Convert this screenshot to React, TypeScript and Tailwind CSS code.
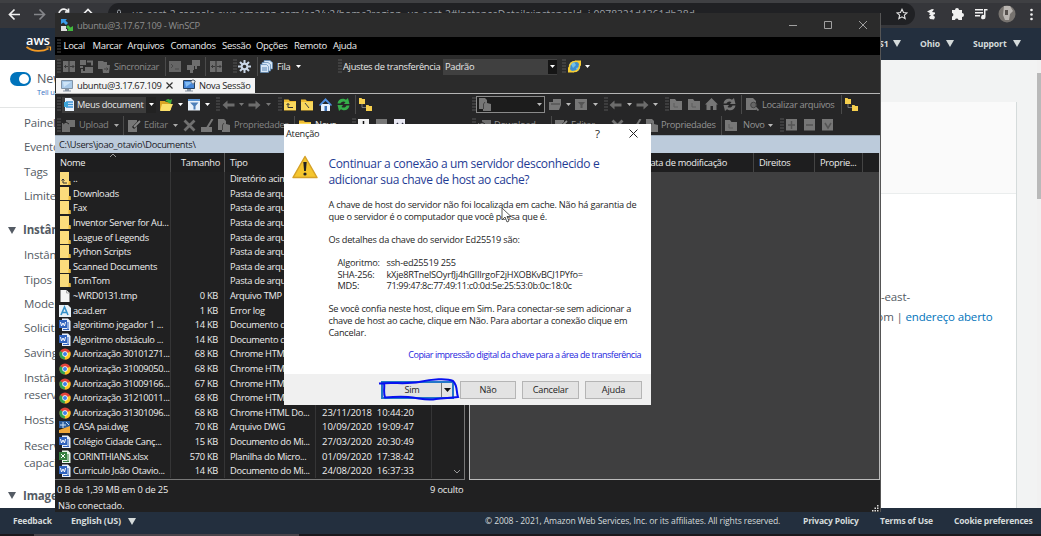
import type { ReactNode } from "react";

type IconProps = { className?: string };

const Grip = () => (
  <svg width="4" height="15" viewBox="0 0 4 15" className="shrink-0">
    <path d="M0.5 1h1M0.5 4h1M0.5 7h1M0.5 10h1M0.5 13h1M2.5 1h1M2.5 4h1M2.5 7h1M2.5 10h1M2.5 13h1" stroke="#666" strokeWidth="1.4" />
  </svg>
);
const Sep = () => <div className="h-[19px] w-px bg-[#4a4a4a]" />;
const Caret = ({ className = "text-white" }: IconProps) => (
  <svg width="5" height="3" viewBox="0 0 5 3" className={`shrink-0 ${className}`}>
    <path d="M0 0h5L2.5 3z" fill="currentColor" />
  </svg>
);
const Slot = ({ w, children }: { w: string; children?: ReactNode }) => (
  <div className={`flex h-full shrink-0 items-center whitespace-nowrap ${w}`}>{children}</div>
);
const Box = ({ children }: { children: ReactNode }) => (
  <svg width="13" height="13" viewBox="0 0 13 13" className="shrink-0">{children}</svg>
);
const GColumns = () => <Box><path d="M0 1h5.500v11H0zM6.500 1H12v11H6.500z" fill="#6e6e6e" /><path d="M1 6.500h4M7 6.500h4M3 5L1.500 6.500 3 8M9.500 5L11 6.500 9.500 8" stroke="#3a3a3a" fill="none" /></Box>;
const GSwap = () => <Box><path d="M0 0h6v5H0zM5 7h8v6H5zM0 6h3v2H0z" fill="#6e6e6e" /><path d="M7 1.500h5v4M2 9v3h3" stroke="#6e6e6e" fill="none" strokeWidth="2" /></Box>;
const GSync = () => <Box><path d="M0 1h5l1 1h3v7H0zM4 5h8l-1 8H5z" fill="#6e6e6e" /><path d="M6 9h4M8.500 7.500L10 9l-1.500 1.500" stroke="#444" fill="none" /></Box>;
const GTerm = () => <Box><path d="M0 1h12v11H0z" fill="#666" /><path d="M2 4l2 2-2 2M6 9h4" stroke="#4a4a4a" fill="none" /></Box>;
const GPcs = () => <Box><path d="M5 0h8v6H5zM0 5h7v5H0zM3 10h3v3H3zM8 6h2v3H8z" fill="#6e6e6e" /></Box>;
const GDoc = () => <Box><path d="M0 0h6l2 2v3l4 1v7H4v-2H0z" fill="#777" /><path d="M6 4l-1.500 2v5" stroke="#444" fill="none" /></Box>;
const GUp = () => <Box><path d="M4 1h9v7H4zM0 4h8v9H0z" fill="#707070" /><path d="M1 5l3-2 3 2" stroke="#2a2a2a" fill="none" /></Box>;
const GEdit = () => <Box><path d="M0 1h9v12H0z" fill="#777" /><path d="M5 9l7-7" stroke="#222" strokeWidth="3" /><path d="M6 8l6-6" stroke="#888" strokeWidth="1.800" /></Box>;
const GX = () => <Box><path d="M1.500 1.500l10 10M11.500 1.500l-10 10" stroke="#707070" strokeWidth="2.800" /></Box>;
const GBrush = () => <Box><path d="M0 8h11v5H0z" fill="#777" /><path d="M6 9l5.500-9" stroke="#777" strokeWidth="2" /></Box>;
const GFolder = () => <Box><path d="M0 1h5l1.500 2H12v9H0z" fill="#777" /><path d="M4 5v4h4" stroke="#5f5f5f" fill="none" /></Box>;
const GFolderOpen = () => <Box><path d="M0 4h4V1h8v6l-2 5H0z" fill="#777" /><path d="M2 6h9" stroke="#444" /></Box>;
const GFilter = () => <Box><path d="M0 1h12v11H0z" fill="#777" /><path d="M3 4h7L7.500 7v3h-2V7z" fill="#555" /></Box>;
const GHome = () => <Box><path d="M0 6.500L6.500 0 13 6.500h-1.500V12H8V8H5.500v4h-4V6.500z" fill="#777" /></Box>;
const Refresh = ({ className = "" }: IconProps) => (
  <svg width="13" height="13" viewBox="0 0 13 13" className={className}>
    <path d="M0.500 5.500C1 2 4 0 7.500 1L9 1.800 11 0l1.500 6H7l1.500-2C6 2.500 4 4 3.500 5.500zM12.500 7.500c-.5 3.500-3.500 5.500-7 4.500L4 11.200 2 13 .5 7H6L4.500 9c2.500 1.500 4.500 0 5-1.500z" fill="currentColor" />
  </svg>
);
const Arrow = ({ right = false }: { right?: boolean }) => (
  <svg width="13" height="10" viewBox="0 0 13 10" className={right ? "-scale-x-100" : ""}>
    <path d="M5.500 0.500v3H12.500v3H5.500v3L0.500 5z" fill="#6c6c6c" />
  </svg>
);
const GSearch = () => <Box><path d="M0 0h7l3 3v9H0z" fill="#777" /><circle cx="7.500" cy="7" r="2.800" fill="#666" stroke="#444" /><path d="M9.500 9.500l3 3" stroke="#777" strokeWidth="1.800" /></Box>;
const GSquare = ({ d, c = "#777", ink = "#555" }: { d: string; c?: string; ink?: string }) => (
  <svg width="11" height="12" viewBox="0 0 11 12"><path d="M0 0h11v11.500H0z" fill={c} /><path d={d} stroke={ink} strokeWidth="1.500" fill="none" /></svg>
);
const Tree = () => <Box><path d="M0 0h2.500l.7 1H6v5H0zM7 7h2.500l.7 1H13v5H7z" fill="#f6cf4e" /><path d="M3 6v3.500h4" stroke="#777" fill="none" /></Box>;
const YFolder = ({ up = false }: { up?: boolean }) => (
  <Box><path d="M0 1.500h4.500L6 3h6v9.500H0z" fill="#eebc32" /><path d="M0 4h12v8H0z" fill="#f9d85d" />{up ? <path d="M4 5.500v4h5M2.500 7L4 5.500 5.500 7" stroke="#333" fill="none" /> : <path d="M4 5l4 5" stroke="#444" />}</Box>
);
const Gear = () => (
  <Box><g stroke="#c9d6e6" strokeWidth="2"><path d="M6.500 0v13M0 6.500h13M2 2l9 9M11 2l-9 9" /></g><circle cx="6.500" cy="6.500" r="3.800" fill="#c9d6e6" /><circle cx="6.500" cy="6.500" r="1.800" fill="#2a2a2a" /></Box>
);
const Queue = () => <Box><g fill="#d6e6f6" stroke="#5a87b5" strokeWidth=".7"><path d="M4 .5h6l2.500 2V9H4z" /><path d="M2 2.500h6l2.500 2V11H2z" /><path d="M.5 4.500h6l2 2v6h-8z" /></g><path d="M2 8h5M2 10h5" stroke="#5a87b5" /></Box>;
const Globe = () => <Box><circle cx="6.500" cy="6.500" r="5.500" fill="#3d8ed0" /><path d="M3 4l3-2 2 3-3 3zM8 8l3-1-2 4z" fill="#71c1e8" /><path d="M0 12.500V7l2 1c0 2 1 3 3 3l1 1.500zM13 .5V6l-2-1c0-2-1-3-3-3L7 .5z" fill="#f8cf35" /><path d="M1.500 8C1 4 4 1 8 1.500M11.500 5c.5 4-2.500 7-6.500 6.500" stroke="#f8cf35" strokeWidth="1.600" fill="none" /></Box>;
const Monitor = ({ bright = false }: { bright?: boolean }) => (
  <Box><path d="M.5 1.500h11v8H.5z" fill={bright ? "#4687d8" : "#a8c9e8"} stroke={bright ? "#24405f" : "#8093a6"} /><path d="M2 3h8L3 8z" fill={bright ? "#83bdf5" : "#cde4f7"} /><path d="M4 10h4v1.500h2v1H2v-1h2z" fill="#8794a3" />{bright && <path d="M10 0l1 2 2 .5-2 1-1 2-1-2-2-1 2-.5z" fill="#e9eef4" stroke="#666" strokeWidth=".5" />}</Box>
);
const PageBlue = () => <Box><path d="M1 0h6l3 3v10H1z" fill="#eaf3fc" /><path d="M2 4h7M2 6.500h7M2 9h7" stroke="#3d93d6" strokeWidth="1.300" /><path d="M0 4h4v5H0z" fill="#3aa3d8" /></Box>;
const OpenFolder = () => <Box><path d="M0 3h5l1 1h5v8H0z" fill="#d9a423" /><path d="M2 6h11l-3 7H0z" fill="#fbe06a" /><path d="M5 4c2-4 4-3 5-2l2-1-1 5-4-2 1-1z" fill="#3fae3f" /></Box>;
const Filter = () => <Box><path d="M0 1h12v11.500H0z" fill="#e9f1fa" /><path d="M0 1h12v2H0z" fill="#5b95d4" /><path d="M2 4.500h8.500L7.500 8v3.500h-2V8z" fill="#4e7fb8" /></Box>;
const Home = () => <Box><path d="M2 6h9v7H2z" fill="#e7f0fb" /><path d="M0 7l6.500-7L13 7l-1 1-5.500-5L1 8z" fill="#4f8fe0" /><path d="M5.500 8h2.500v5H5.500z" fill="#3c70b4" /></Box>;

type Kind = "up" | "folder" | "file" | "log" | "word" | "chrome" | "dwg" | "excel";
const glyphs: Record<Kind, ReactNode> = {
  up: <><path d="M1 0h9v11l1.500.5V13H1z" fill="#fbdc7c" /><path d="M10 9h1.500v4H9z" fill="#e9b83b" /><path d="M4 7v4h4M2.500 8.500L4 7l1.500 1.500" stroke="#333" fill="none" /></>,
  folder: <><path d="M1 0h9v9l1.500.5V13H1z" fill="#fbdc7c" /><path d="M9.500 9h2v4h-2z" fill="#e9b83b" /></>,
  file: <><path d="M1.500 1h6l3 3v9h-9z" fill="#f4f4f4" /><path d="M7.500 1v3h3" stroke="#aaa" fill="none" /></>,
  log: <><path d="M0 1h9l3 3v9H0z" fill="#e9f2f8" /><path d="M2 11L5.500 3 9 11M3.500 8.500h4" stroke="#3590c8" strokeWidth="1.600" fill="none" /></>,
  word: <><path d="M3 .5h6l2.500 2.500v10H3z" fill="#e8effa" /><path d="M9 4v7M4 11.500h6" stroke="#2f62bd" /><path d="M0 2h8v8H0z" fill="#2f62bd" /><path d="M1.500 4l1 4L4 5l1.500 3 1-4" stroke="#fff" fill="none" /></>,
  excel: <><path d="M3 .5h6l2.500 2.500v10H3z" fill="#e8f5ea" /><path d="M9 4v7M4 11.500h6" stroke="#34803f" /><path d="M0 2h8v8H0z" fill="#34803f" /><path d="M2 4l4 4M6 4L2 8" stroke="#fff" fill="none" /></>,
  chrome: <><circle cx="6" cy="7" r="5.600" fill="#e2453a" /><path d="M6 7L1.200 4.100A5.600 5.600 0 0 0 5.800 12.600L8.500 8.500z" fill="#2fa24f" /><path d="M6 7l5.200-2.200A5.600 5.600 0 0 1 5.800 12.600z" fill="#fbc824" /><circle cx="6" cy="7" r="2.700" fill="#fff" /><circle cx="6" cy="7" r="2" fill="#3f7fe8" /></>,
  dwg: <><path d="M0 1h11v7H0z" fill="#2b5c9c" /><path d="M0 10l11-4v7H0z" fill="#efa73a" /><path d="M4 2v6M1 5h6M7 2l3 3" stroke="#cfe2f5" /></>,
};
const FileIcon = ({ kind }: { kind: Kind }) => (
  <svg width="12" height="14" viewBox="0 0 12 14" className="shrink-0">{glyphs[kind]}</svg>
);

const files: { kind: Kind; name: string; size?: string; type: string; date?: string }[] = [
  { kind: "up", name: "..", type: "Diretório acima" },
  { kind: "folder", name: "Downloads", type: "Pasta de arquivos" },
  { kind: "folder", name: "Fax", type: "Pasta de arquivos" },
  { kind: "folder", name: "Inventor Server for Au...", type: "Pasta de arquivos" },
  { kind: "folder", name: "League of Legends", type: "Pasta de arquivos" },
  { kind: "folder", name: "Python Scripts", type: "Pasta de arquivos" },
  { kind: "folder", name: "Scanned Documents", type: "Pasta de arquivos" },
  { kind: "folder", name: "TomTom", type: "Pasta de arquivos" },
  { kind: "file", name: "~WRD0131.tmp", size: "0 KB", type: "Arquivo TMP" },
  { kind: "log", name: "acad.err", size: "1 KB", type: "Error log" },
  { kind: "word", name: "algoritimo jogador 1 ...", size: "14 KB", type: "Documento do Mi..." },
  { kind: "word", name: "Algoritmo obstáculo ...", size: "14 KB", type: "Documento do Mi..." },
  { kind: "chrome", name: "Autorização 30101271...", size: "68 KB", type: "Chrome HTML Do..." },
  { kind: "chrome", name: "Autorização 31009050...", size: "68 KB", type: "Chrome HTML Do..." },
  { kind: "chrome", name: "Autorização 31009166...", size: "67 KB", type: "Chrome HTML Do..." },
  { kind: "chrome", name: "Autorização 31210011...", size: "68 KB", type: "Chrome HTML Do..." },
  { kind: "chrome", name: "Autorização 31301096...", size: "68 KB", type: "Chrome HTML Do...", date: "23/11/2018  10:44:20" },
  { kind: "dwg", name: "CASA pai.dwg", size: "70 KB", type: "Arquivo DWG", date: "10/09/2020  19:09:47" },
  { kind: "word", name: "Colégio Cidade Canç...", size: "15 KB", type: "Documento do Mi...", date: "27/03/2020  20:30:49" },
  { kind: "excel", name: "CORINTHIANS.xlsx", size: "570 KB", type: "Planilha do Micro...", date: "01/09/2020  17:38:42" },
  { kind: "word", name: "Curriculo João Otavio...", size: "14 KB", type: "Documento do Mi...", date: "24/08/2020  16:37:33" },
];

const Tri = ({ dark = false }: { dark?: boolean }) => (
  <svg width="8" height="7" viewBox="0 0 8 7" className="shrink-0"><path d="M0 0h8L4 7z" fill={dark ? "#545b64" : "#d5dbdb"} /></svg>
);

function Browser() {
  const side = "h-[24.4px] pl-6";
  return (
    <div className="flex h-[536px] w-[1041px] flex-col bg-white">
      <div className="flex h-7 flex-col bg-[#35363a]">
        <div className="h-[3px] bg-[#3f4043]" />
        <div className="flex h-[22px] items-center text-[#f1f1f1]">
          <svg width="108" height="22" viewBox="0 0 108 22" fill="none" stroke="currentColor" strokeWidth="1.700" className="shrink-0">
            <path d="M20 11.500H10M14.500 6.500l-5 5 5 5" />
            <path d="M34 11.500h10M39.500 6.500l5 5-5 5" stroke="#85868a" />
            <path d="M67 14.500a4.800 4.800 0 1 1 .5-6.500M68.500 5.500v3.500H65" />
            <path d="M83 11.500l5-5 5 5" />
          </svg>
          <div className="flex h-[22px] w-[807px] items-center rounded-full bg-[#202124] pl-[7px]">
            <svg width="8" height="11" viewBox="0 0 8 11" fill="none" stroke="#9aa0a6"><path d="M1 5h6v5H1zM2.500 5V2.500a1.500 1.500 0 0 1 3 0V5" /></svg>
            <span className="mt-px ml-[9px] text-[10.4px] tracking-[-0.08px] text-[#9da0a4]">us-east-2.console.aws.amazon.com/ec2/v2/home?region=us-east-2#InstanceDetails:instanceId=i-0978321d4361db38d</span>
            <svg width="12" height="12" viewBox="0 0 24 24" className="mr-[7px] ml-auto" fill="none" stroke="#e4e4e4" strokeWidth="2.200"><path d="M12 2.500l3 6.500 7 .7-5.300 4.700 1.600 7L12 17.700l-6.300 3.700 1.600-7L2 9.700 9 9z" /></svg>
          </div>
          <svg width="118" height="22" viewBox="0 0 118 22" fill="currentColor">
            <path d="M12 8.500l5-2.500 2 .5-2 2.500 3 .5v1.500l-2 1 2 2-1 2.500-4-.5-1-2 2-1.500-2-1 1-1.500z" />
            <path d="M37 8h3a2 2 0 0 1 4 0h3v3a2 2 0 0 1 0 4v3h-3.500a1.800 1.800 0 0 0-3.500 0h-3v-3.500a1.800 1.800 0 0 0 0-3.500z" transform="translate(0 -1)" />
            <path d="M60 6h8v1.500h-8zM60 9h8v1.500h-8zM60 12h5v1.500h-5zM69 6h3.500v1.500h-2V14a2.200 2.200 0 1 1-1.500-2z" />
            <circle cx="92" cy="11" r="8.500" fill="#77736f" />
            <path d="M89 3h6l3 5-3 3-1 6h-4l-2-5z" fill="#b9b5b1" /><path d="M90 7h3v5h-3z" fill="#55504d" />
            <circle cx="116.500" cy="7" r="1.300" /><circle cx="116.500" cy="11.500" r="1.300" /><circle cx="116.500" cy="16" r="1.300" />
          </svg>
        </div>
      </div>
      <div className="flex h-8 items-center bg-[#232f3e] pl-[26px] font-bold text-[#d5dbdb]">
        <svg width="26" height="20" viewBox="0 0 26 20" className="shrink-0">
          <text x="0" y="11" fontFamily="Open Sans, sans-serif" fontWeight="600" fontSize="12" textLength="24" lengthAdjust="spacingAndGlyphs" fill="#fff">aws</text>
          <path d="M0.500 13c7 5 16 5 22 1.500" stroke="#f39a23" strokeWidth="1.700" fill="none" /><path d="M20.500 13h4v3.500" stroke="#f39a23" strokeWidth="1.200" fill="none" />
        </svg>
        <div className="ml-auto flex w-[162px] shrink-0 items-center text-[8.6px] tracking-[-0.1px]">
          <span className="w-[14px]">S1</span><Tri /><span className="ml-[19px] w-[26px]">Ohio</span><Tri /><span className="ml-[19px] w-[40px]">Support</span><Tri />
        </div>
      </div>
      <div className="flex h-[448px] text-[11.5px] tracking-[-0.15px] text-[#545b64]">
        <div className="flex w-[160px] shrink-0 flex-col overflow-hidden whitespace-nowrap">
          <div className="flex h-[48px] border-b border-[#e3e5e5] pt-[12px] pl-[10px]">
            <div className="flex h-[14px] w-[21px] justify-end rounded-full bg-[#0073bb] p-[2px]"><div className="size-[10px] rounded-full bg-white" /></div>
            <div className="pl-[6px]"><div className="text-[12.5px] leading-[14px]">New EC2</div><div className="text-[7.5px] leading-[13px] text-[#3b73c4]">Tell us</div></div>
          </div>
          <div className="flex flex-col pt-[3px] leading-[24.4px]">
            <div className={side}>Painel</div><div className={side}>Eventos</div><div className={side}>Tags</div><div className={side}>Limites</div>
            <div className="mt-[9.5px] mb-[1px] flex items-center pl-[8px] font-bold"><Tri dark /><span className="ml-[7px]">Instâncias</span></div>
            <div className={side}>Instâncias</div><div className={side}>Tipos</div><div className={side}>Modelos</div><div className={side}>Solicitações</div><div className={side}>Savings</div>
            <div className="pt-[4px] pb-[5px] pl-6 leading-[17px]">Instâncias<br />reservadas</div>
            <div className={side}>Hosts</div>
            <div className="pt-[4px] pl-6 leading-[17px]">Reservas de<br />capacidade</div>
            <div className="mt-[13px] flex items-center pl-[8px] font-bold"><Tri dark /><span className="ml-[7px]">Imagens</span></div>
          </div>
        </div>
        <div className="flex grow bg-[#f2f3f3] pt-[42px]">
          <div className="flex w-[857px] flex-col border-r border-[#d5dbdb] bg-white leading-[20px] whitespace-nowrap">
            <div className="h-[92px] border-b border-[#eaeded] bg-[#fafafa]" />
            <div className="flex flex-col pt-[93px] pl-[720px]">
              <span className="pl-[1px]">-east-</span>
              <span className="-ml-[9px]">com | <span className="text-[#0073bb]">endereço aberto</span></span>
            </div>
          </div>
        </div>
        <div className="w-[4px] bg-[#f1f1f1] pt-[13px]"><div className="h-[126px] bg-[#b9b9b9]" /></div>
      </div>
      <div className="flex h-[26px] items-center bg-[#232f3e] text-[8.5px] font-bold tracking-[-0.18px] whitespace-nowrap text-[#d5dbdb]">
        <span className="w-[59px] pl-[13px]">Feedback</span><span className="ml-[12px] w-[57px] text-[9px]">English (US)</span><Tri />
        <span className="ml-[349px] w-[318px] text-[8.6px] font-normal tracking-[-0.11px]">© 2008 - 2021, Amazon Web Services, Inc. or its affiliates. All rights reserved.</span>
        <span className="w-[77px]">Privacy Policy</span><span className="w-[74px]">Terms of Use</span><span>Cookie preferences</span>
      </div>
      <div className="flex h-[2px] bg-[#1b181c]"><div className="ml-[34px] h-[2px] w-[265px] bg-[#49444a]" /></div>
    </div>
  );
}

function MainToolbar() {
  return (
    <div className="flex h-[23px] shrink-0 items-center bg-[#2b2b2b] pl-[2px] text-[#e8e8e8]">
      <Slot w="w-[6px]"><Grip /></Slot><Slot w="w-[17px]"><GColumns /></Slot><Slot w="w-[18px]"><GSwap /></Slot><Slot w="w-[16px]"><GSync /></Slot>
      <Slot w="w-[51px] text-[#8c8c8c]">Sincronizar</Slot><Slot w="w-[4px]"><Sep /></Slot><Slot w="w-[18px]"><GTerm /></Slot><Slot w="w-[18px]"><GPcs /></Slot><Slot w="w-[5px]"><Sep /></Slot>
      <Slot w="w-[23px]"><GColumns /></Slot><Slot w="w-[5px]"><Grip /></Slot><Slot w="w-[19px]"><Gear /></Slot><Slot w="w-[3px]"><Sep /></Slot><Slot w="w-[17px]"><Queue /></Slot>
      <Slot w="w-[19px]">Fila</Slot><Slot w="w-[42px]"><Caret /></Slot><Slot w="w-[5px]"><Grip /></Slot><Slot w="w-[100px]">Ajustes de transferência</Slot>
      <Slot w="w-[119px]"><div className="flex h-[16px] w-[114px] items-center justify-between bg-[#404040] pl-[2px]">Padrão<div className="flex h-[14px] w-[9px] items-center justify-center bg-[#151515]"><Caret /></div></div></Slot>
      <Slot w="w-[6px]"><Grip /></Slot><Slot w="w-[17px]"><Globe /></Slot><Slot w="w-[6px]"><Caret /></Slot>
    </div>
  );
}

function LeftTools() {
  return (
    <div className="w-[415px] shrink-0 pl-[2px] text-[#e8e8e8]">
      <div className="flex h-[21px]">
        <Slot w="w-[5px]"><Grip /></Slot>
        <Slot w="w-[98px]"><div className="flex h-[16px] w-[94px] items-center bg-[#3c3c3c] pl-[2px]"><PageBlue /><span className="w-[69px]">Meus document</span><div className="flex h-full w-[10px] items-center justify-center bg-[#222]"><Caret /></div></div></Slot>
        <Slot w="w-[18px]"><OpenFolder /></Slot><Slot w="w-[10px]"><Caret /></Slot><Slot w="w-[17px]"><Filter /></Slot><Slot w="w-[11px]"><Caret /></Slot>
        <Slot w="w-[6px]"><Grip /></Slot><Slot w="w-[17px]"><Arrow /></Slot><Slot w="w-[9px]"><Caret className="text-[#777]" /></Slot><Slot w="w-[18px]"><Arrow right /></Slot><Slot w="w-[12px]"><Caret className="text-[#777]" /></Slot>
        <Slot w="w-[6px]"><Grip /></Slot><Slot w="w-[17px]"><YFolder up /></Slot><Slot w="w-[18px]"><YFolder /></Slot><Slot w="w-[18px]"><Home /></Slot><Slot w="w-[18px]"><Refresh className="text-[#35ad49]" /></Slot><Slot w="w-[4px]"><Sep /></Slot><Slot w="w-[14px]"><Tree /></Slot>
      </div>
      <div className="flex h-[20px] text-[#858585]">
        <Slot w="w-[5px]"><Grip /></Slot><Slot w="w-[17px]"><GUp /></Slot><Slot w="w-[35px]">Upload</Slot><Slot w="w-[9px]"><Caret className="text-[#aaa]" /></Slot><Slot w="w-[5px]"><Sep /></Slot>
        <Slot w="w-[16px]"><GEdit /></Slot><Slot w="w-[29px]">Editar</Slot><Slot w="w-[10px]"><Caret className="text-[#aaa]" /></Slot><Slot w="w-[18px]"><GX /></Slot><Slot w="w-[17px]"><GBrush /></Slot><Slot w="w-[16px]"><GDoc /></Slot>
        <Slot w="w-[60px]">Propriedades</Slot><Slot w="w-[5px]"><Sep /></Slot><Slot w="w-[16px]"><YFolder /></Slot><Slot w="w-[37px] text-[#e8e8e8]">Novo</Slot>
        <Slot w="w-[6px]"><Grip /></Slot><Slot w="w-[18px]"><GSquare d="M2 6h7M5.500 2v8" c="#f2f2f2" ink="#111" /></Slot><Slot w="w-[18px]"><GSquare d="M2 6h7" /></Slot><Slot w="w-[18px]"><GSquare d="M3 4l3 5 3-5" c="#e8e8f2" ink="#334" /></Slot>
      </div>
    </div>
  );
}

function RightTools() {
  const gray = "text-[#777]";
  const light = "text-[#bbb]";
  return (
    <div className="pl-[2px] text-[#949494]">
      <div className="flex h-[21px]">
        <Slot w="w-[4px]"><Grip /></Slot>
        <Slot w="w-[73px]"><div className="flex h-[17px] w-[69px] items-center justify-between border border-[#8a8a8a] bg-[#1c1c1c] pr-[2px] pl-[2px]"><GDoc /><Caret className={light} /></div></Slot>
        <Slot w="w-[17px]"><GFolderOpen /></Slot><Slot w="w-[9px]"><Caret className={light} /></Slot><Slot w="w-[18px]"><GFilter /></Slot><Slot w="w-[11px]"><Caret className={light} /></Slot>
        <Slot w="w-[5px]"><Grip /></Slot><Slot w="w-[18px]"><Arrow /></Slot><Slot w="w-[9px]"><Caret className={light} /></Slot><Slot w="w-[17px]"><Arrow right /></Slot><Slot w="w-[12px]"><Caret className={light} /></Slot>
        <Slot w="w-[5px]"><Grip /></Slot><Slot w="w-[18px]"><GFolder /></Slot><Slot w="w-[17px]"><GFolder /></Slot><Slot w="w-[18px]"><GHome /></Slot><Slot w="w-[18px]"><Refresh className={gray} /></Slot><Slot w="w-[5px]"><Sep /></Slot>
        <Slot w="w-[16px]"><GSearch /></Slot><Slot w="w-[79px]">Localizar arquivos</Slot><Slot w="w-[4px]"><Sep /></Slot><Slot w="w-[14px]"><Tree /></Slot>
      </div>
      <div className="flex h-[20px]">
        <Slot w="w-[6px]"><Grip /></Slot><Slot w="w-[16px]"><GUp /></Slot><Slot w="w-[52px]">Download</Slot><Slot w="w-[5px]"><Caret className={gray} /></Slot><Slot w="w-[4px]"><Sep /></Slot>
        <Slot w="w-[16px]"><GEdit /></Slot><Slot w="w-[40px]">Editar</Slot><Slot w="w-[18px]"><GX /></Slot><Slot w="w-[17px]"><GBrush /></Slot><Slot w="w-[15px]"><GDoc /></Slot>
        <Slot w="w-[60px]">Propriedades</Slot><Slot w="w-[4px]"><Sep /></Slot><Slot w="w-[18px]"><GFolder /></Slot><Slot w="w-[25px]">Novo</Slot><Slot w="w-[12px]"><Caret className={light} /></Slot>
        <Slot w="w-[6px]"><Grip /></Slot><Slot w="w-[18px]"><GSquare d="M2 6h7M5.500 2v8" /></Slot><Slot w="w-[18px]"><GSquare d="M2 6h7" /></Slot><Slot w="w-[18px]"><GSquare d="M3 4l3 5 3-5" /></Slot>
      </div>
    </div>
  );
}

function WinScp() {
  return (
    <div className="absolute top-[13px] left-[55px] flex h-[499px] w-[826px] flex-col overflow-hidden border-r border-[#555] bg-[#202021] text-[9.3px] tracking-[-0.3px] text-[#eee]">
      <div className="flex h-6 shrink-0 items-center bg-[#2b2b2b] pl-[6px] text-[#8f8f8f]">
        <svg width="12" height="13" viewBox="0 0 12 13"><path d="M0 0h6L4.500 1.500 7 4 5 6 2.500 3.500 0 5z" fill="#3b9be8" /><path d="M12 12H6l1.500-1.500L5 8l2-2 2.500 2.500L12 7z" fill="#42b83e" /><path d="M0 7h5v3h1v2H0z" fill="#ddd" /></svg>
        <span className="mt-px ml-[4px]">ubuntu@3.17.67.109 - WinSCP</span>
        <svg width="80" height="10" viewBox="0 0 80 10" className="mr-[12px] ml-auto" fill="none" stroke="#a0a0a0"><path d="M1 5.500h8M36.500 1.500h7v7h-7zM71 1l8 8M79 1l-8 8" /></svg>
      </div>
      <div className="flex h-[18px] shrink-0 items-center bg-black pt-px pl-[2px] text-[9.5px]">
        <Slot w="w-[6.5px]"><Grip /></Slot><Slot w="w-[29px]">Local</Slot><Slot w="w-[35px]">Marcar</Slot><Slot w="w-[43px]">Arquivos</Slot><Slot w="w-[51.5px]">Comandos</Slot><Slot w="w-[34px]">Sessão</Slot><Slot w="w-[38px]">Opções</Slot><Slot w="w-[39px]">Remoto</Slot><Slot w="w-[30px]">Ajuda</Slot>
      </div>
      <MainToolbar />
      <div className="flex h-[16px] shrink-0 items-end border-b border-[#b5b5b5] bg-[#2b2b2b] pl-px text-[#222]">
        <div className="flex h-[15px] w-[199px] items-center bg-[#f4f4f4] pl-[5px] whitespace-nowrap">
          <Slot w="w-[16px]"><Monitor /></Slot><Slot w="w-[89px] pt-px">ubuntu@3.17.67.109</Slot>
          <Slot w="w-[17px]"><svg width="7" height="7" viewBox="0 0 7 7" stroke="#333" strokeWidth="1.200"><path d="M.5.5l6 6M6.500.5l-6 6" /></svg></Slot>
          <Slot w="w-[16px]"><Monitor bright /></Slot><Slot w="w-[55px] pt-px">Nova Sessão</Slot>
        </div>
      </div>
      <div className="flex h-[41px] shrink-0 bg-[#262627]"><LeftTools /><RightTools /></div>
      <div className="flex h-[18px] shrink-0 items-center border-t border-[#9ba9b6] bg-[#bccbdb] pl-[4px] text-[#1b2026]">C:\Users\joao_otavio\Documents\</div>
      <div className="flex h-[327px] shrink-0 bg-[#202021]">
        <div className="flex w-[410px] shrink-0 flex-col border-r border-b border-[#777]">
          <div className="flex h-[19px] shrink-0 items-center bg-[#1e1e1f]">
            <div className="flex h-full w-[116px] items-center border-r border-[#444] pl-[5px]"><span className="w-[49px]">Nome</span><svg width="8" height="5" viewBox="0 0 8 5" className="mb-[14px]" fill="none" stroke="#999"><path d="M1 4l3-3 3 3" /></svg></div>
            <div className="flex h-full w-[54px] items-center justify-end border-r border-[#555] pr-[4px]">Tamanho</div><div className="pl-[5px]">Tipo</div>
          </div>
          {files.map((f) => (
            <div key={f.name} className="flex h-[14.6px] shrink-0 items-center leading-[14px] whitespace-pre">
              <div className="flex h-full w-[116px] shrink-0 items-center border-r border-[#353536] pl-[4px]"><FileIcon kind={f.kind} /><span className="ml-[2px]">{f.name}</span></div>
              <div className="flex h-full w-[54px] items-center justify-end border-r border-[#353536] pr-[6px]">{f.size}</div>
              <div className="flex h-full w-[91px] items-center border-r border-[#353536] pl-[5px]">{f.type}</div>
              <div className="flex h-full w-[116px] items-center border-r border-[#353536] pl-[6px] text-[9.5px] tracking-[-0.05px]">{f.date}</div>
            </div>
          ))}
          <svg width="8" height="5" viewBox="0 0 8 5" className="absolute top-[456px] left-[398px]" fill="none" stroke="#999"><path d="M1 1l3 3 3-3" /></svg>
        </div>
        <div className="ml-[4px] flex w-[411px] flex-col border-r border-b border-l border-[#bbb] bg-[#3f3f40]">
          <div className="flex h-[19px] items-center bg-[#1e1e1f] pl-[174px]">
            <div className="flex h-full w-[110px] items-center border-r border-[#444]">Data de modificação</div>
            <div className="flex h-full w-[61px] items-center border-r border-[#444] pl-[5px]">Direitos</div>
            <div className="flex h-full w-[48px] items-center border-r border-[#444] pl-[5px]">Proprie...</div>
          </div>
        </div>
      </div>
      <div className="flex h-[19px] shrink-0 items-center pl-[2px] tracking-[-0.15px]"><span className="w-[373px]">0 B de 1,39 MB em 0 de 25</span>9 oculto</div>
      <div className="flex grow items-center justify-between pl-[3px] tracking-[-0.1px]">Não conectado.<svg width="8" height="8" viewBox="0 0 8 8" className="self-end"><path d="M5 0h1.500v1.500H5zM2.500 2.500H4V4H2.500zM5 2.500h1.500V4H5zM0 5h1.500v1.500H0zM2.500 5H4v1.500H2.500zM5 5h1.500v1.500H5z" fill="#ddd" /></svg></div>
    </div>
  );
}

function Dialog() {
  const btn = "flex h-[18px] items-center justify-center border border-[#b5b5b5] bg-[#e3e3e3]";
  return (
    <div className="absolute top-[124px] left-[284px] flex h-[281px] w-[367px] flex-col bg-white text-[9.2px] tracking-[-0.22px] text-[#1e1e1e]">
      <div className="flex h-[19px] items-center pl-[2px]"><span>Atenção</span><span className="ml-auto w-[34px] text-[11.5px]">?</span><svg width="9" height="9" viewBox="0 0 9 9" className="mr-[13px]" stroke="#222"><path d="M.5.5l8 8M8.500.5l-8 8" /></svg></div>
      <div className="flex h-[231px] pt-[13px] pl-[8px]">
        <svg width="26" height="24" viewBox="0 0 26 24" className="mt-[-1px] shrink-0"><path d="M13 1.500L25 22.500H1z" fill="#f5c62e" stroke="#d5a127" strokeWidth="1.500" strokeLinejoin="round" /><path d="M11.300 7h3.400l-.8 9h-1.800z" fill="#222" /><circle cx="13" cy="19" r="1.600" fill="#222" /></svg>
        <div className="ml-[10.5px] flex grow flex-col leading-[11.7px] whitespace-pre">
          <div className="text-[12px] leading-[16px] tracking-[-0.33px] text-[#1f3c94]">Continuar a conexão a um servidor desconhecido e<br />adicionar sua chave de host ao cache?</div>
          <div className="mt-[11px]">A chave de host do servidor não foi localizada em cache. Não há garantia de<br />que o servidor é o computador que você possa que é.</div>
          <div className="mt-[11.5px]">Os detalhes da chave do servidor Ed25519 são:</div>
          <div className="mt-[11.5px] grid grid-cols-[49px_1fr] pl-[9px] leading-[11.5px]"><span>Algoritmo:</span><span>ssh-ed25519 255</span><span>SHA-256:</span><span>kXje8RTnelSOyrfJj4hGlIIrgoF2jHXOBKvBCJ1PYfo=</span><span>MD5:</span><span className="tracking-[-0.35px]">71:99:47:8c:77:49:11:c0:0d:5e:25:53:0b:0c:18:0c</span></div>
          <div className="mt-[11.5px]">Se você confia neste host, clique em Sim. Para conectar-se sem adicionar a<br />chave de host ao cache, clique em Não. Para abortar a conexão clique em<br />Cancelar.</div>
          <div className="mt-[10.5px] pr-[10px] text-right text-[9px] tracking-[-0.47px] text-[#2525dd]">Copiar impressão digital da chave para a área de transferência</div>
        </div>
      </div>
      <div className="flex grow items-center gap-[6px] bg-[#f0f0f0] pl-[97px]">
        <div className="flex h-[18px] w-[73px] items-center border-2 border-[#2478c8] bg-[#e3e3e3]"><span className="w-[58px] text-center">Sim</span><div className="flex h-full w-[11px] items-center justify-center border-l border-[#777]"><svg width="7" height="4" viewBox="0 0 7 4"><path d="M0 0h7L3.500 4z" fill="#111" /></svg></div></div>
        <div className={`${btn} w-[56px]`}>Não</div><div className={`${btn} w-[57px]`}>Cancelar</div><div className={`${btn} w-[57px]`}>Ajuda</div>
      </div>
      <svg width="84" height="28" viewBox="0 0 84 28" className="absolute top-[254px] left-[93px]" fill="none" stroke="#0710f0" strokeWidth="2"><path d="M2 5.500C15 4 30 6.500 42 4 55 1 70 0 76 3c5 5 3 11 5 16-9 1-15 1-22 2-10 2-16-1-28-2-9-.5-17 0-23 .5C6 14 8 9 7 5" /></svg>
      <svg width="11" height="17" viewBox="0 0 11 17" className="absolute top-[83px] left-[217px]"><path d="M1 1v12l3-3 2 5 2-1-2-4.500h4z" fill="#fff" stroke="#333" strokeWidth=".8" /></svg>
    </div>
  );
}

export default function App() {
  return (
    <div className="relative h-[536px] w-[1041px] overflow-hidden font-['Open_Sans','Noto_Sans',sans-serif]">
      <Browser />
      <WinScp />
      <Dialog />
    </div>
  );
}
